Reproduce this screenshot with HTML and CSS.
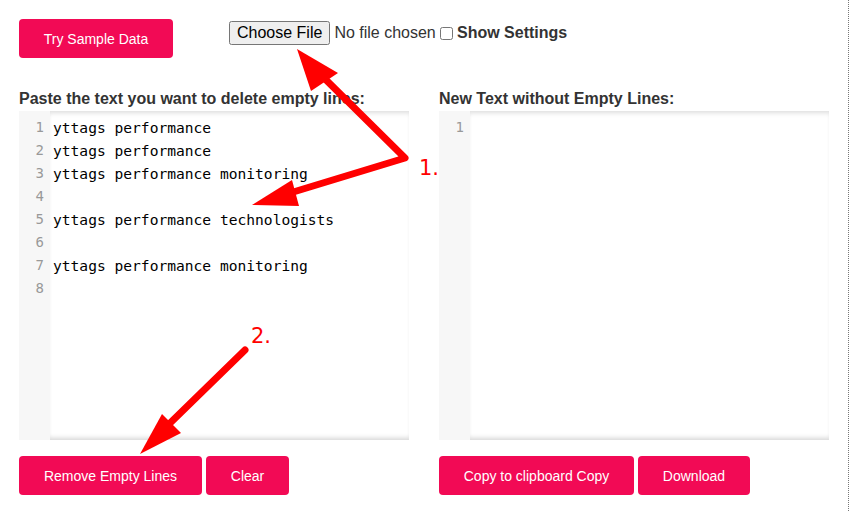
FILE: index.html
```html
<!DOCTYPE html>
<html lang="en">
<head>
    <meta charset="UTF-8">
    <title>Remove Empty Lines</title>
    <link rel="stylesheet" href="styles.css">
</head>
<body>
<div class="page">
    <div class="topBar">
        <button class="btn sampleBn">Try Sample Data</button>
        <div class="fileBox">
            <input type="file" class="fileIn">
            <label class="setting"><input type="checkbox"> Show Settings</label>
        </div>
    </div>
    <div class="columns">
        <div class="col">
            <div class="title">Paste the text you want to delete empty lines:</div>
            <div class="editor">
                <div class="gutter">
                    <div>1</div><div>2</div><div>3</div><div>4</div>
                    <div>5</div><div>6</div><div>7</div><div>8</div>
                </div>
                <div class="code">
                    <div>yttags performance</div>
                    <div>yttags performance</div>
                    <div>yttags performance monitoring</div>
                    <div>&nbsp;</div>
                    <div>yttags performance technologists</div>
                    <div>&nbsp;</div>
                    <div>yttags performance monitoring</div>
                    <div>&nbsp;</div>
                </div>
            </div>
            <div class="btnRow">
                <button class="btn removeBn">Remove Empty Lines</button>
                <button class="btn clearBn">Clear</button>
            </div>
        </div>
        <div class="col">
            <div class="title">New Text without Empty Lines:</div>
            <div class="editor">
                <div class="gutter">
                    <div>1</div>
                </div>
                <div class="code"></div>
            </div>
            <div class="btnRow">
                <button class="btn copyBn">Copy to clipboard Copy</button>
                <button class="btn downBn">Download</button>
            </div>
        </div>
    </div>
    <!-- 标注箭头 -->
    <svg class="marks" width="850" height="511" viewBox="0 0 850 511">
        <g stroke="#ff0000" stroke-width="7" stroke-linecap="round" stroke-linejoin="round" fill="none">
            <polyline points="318,72 405,158 290,193"/>
            <line x1="245" y1="350" x2="165" y2="428"/>
        </g>
        <g fill="#ff0000">
            <polygon points="297,49 338,73 311,91"/>
            <polygon points="252,205 292,180 299,206"/>
            <polygon points="140,454 162,414 181,433"/>
        </g>
        <text x="419" y="175" class="markText">1.</text>
        <text x="251" y="343" class="markText">2.</text>
    </svg>
</div>
</body>
</html>
```

FILE: styles.css
```css
*{
    margin: 0;
    padding: 0;
    box-sizing: border-box;
}
body
{
    font-family: "Liberation Sans", Arial, sans-serif;
    color: #333;
    background: #fff;
}
.page
{
    width: 849px;
    height: 511px;
    border-right: 1px dotted #777;
    padding: 19px 0 0 19px;
    position: relative;
    overflow: hidden;
}
.btn
{
    height: 39px;
    padding: 0 24px;
    border: none;
    border-radius: 4px;
    background-color: #f20a55;
    color: #fff;
    font-family: "Liberation Sans", Arial, sans-serif;
    font-size: 14px;
}
.topBar
{
    display: flex;
    align-items: flex-start;
    height: 39px;
}
.sampleBn
{
    width: 154px;
}
.fileBox
{
    display: flex;
    align-items: center;
    margin-left: 56px;
    margin-top: 2px;
}
.fileIn
{
    font-family: "Liberation Sans", Arial, sans-serif;
    font-size: 16px;
    width: 211px;
    color: #333;
}
.setting
{
    display: flex;
    align-items: center;
    font-weight: bold;
    font-size: 16px;
    color: #333;
}
.setting input
{
    width: 13px;
    height: 13px;
    margin: 0 4px 0 0;
}
.columns
{
    display: flex;
    gap: 30px;
    margin-top: 30px;
}
.col
{
    width: 390px;
}
.title
{
    font-weight: bold;
    font-size: 16px;
    line-height: 21px;
    margin-bottom: 2px;
    color: #333;
}
.editor
{
    display: flex;
    height: 329px;
}
.gutter
{
    width: 31px;
    background: #f7f7f7;
    padding-top: 5px;
    padding-right: 6px;
    text-align: right;
    color: #999;
    font-family: "DejaVu Sans Mono", "Liberation Mono", monospace;
    font-size: 14px;
    line-height: 23px;
}
.code
{
    flex: 1;
    padding: 5px 0 0 3px;
    font-family: "DejaVu Sans Mono", "Liberation Mono", monospace;
    font-size: 14.6px;
    line-height: 23px;
    color: #000;
    white-space: nowrap;
    box-shadow: inset 0 5px 5px -3px #ddd, inset 0 -5px 5px -3px #d6d6d6;
}
.btnRow
{
    margin-top: 16px;
    display: flex;
    gap: 4px;
}
.removeBn{ width: 183px; }
.clearBn{ width: 83px; }
.copyBn{ width: 195px; }
.downBn{ width: 112px; }
.marks
{
    position: absolute;
    left: 0;
    top: 0;
    pointer-events: none;
}
.markText
{
    fill: #ff0000;
    font-family: "DejaVu Sans", sans-serif;
    font-size: 21px;
}
```
